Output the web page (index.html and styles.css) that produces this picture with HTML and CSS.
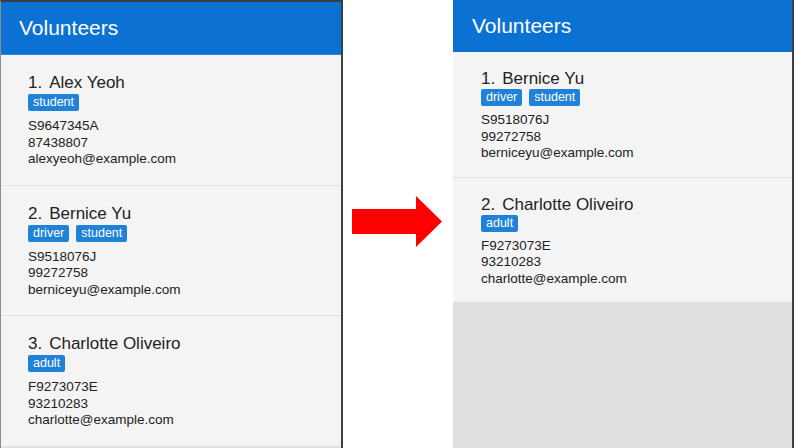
FILE: index.html
```html
<!DOCTYPE html>
<html lang="en">
<head>
<meta charset="utf-8">
<title>Volunteers</title>
<link rel="stylesheet" href="styles.css">
</head>
<body>
<div class="stage">
  <section class="panel panel--before">
    <header class="panel__header">Volunteers</header>
    <ul class="list">
      <li class="card">
        <div class="card__name"><span class="card__index">1.</span>Alex Yeoh</div>
        <div class="tags"><span class="tag">student</span></div>
        <div class="card__details">
          <div>S9647345A</div>
          <div>87438807</div>
          <div>alexyeoh@example.com</div>
        </div>
      </li>
      <li class="card">
        <div class="card__name"><span class="card__index">2.</span>Bernice Yu</div>
        <div class="tags"><span class="tag">driver</span><span class="tag">student</span></div>
        <div class="card__details">
          <div>S9518076J</div>
          <div>99272758</div>
          <div>berniceyu@example.com</div>
        </div>
      </li>
      <li class="card">
        <div class="card__name"><span class="card__index">3.</span>Charlotte Oliveiro</div>
        <div class="tags"><span class="tag">adult</span></div>
        <div class="card__details">
          <div>F9273073E</div>
          <div>93210283</div>
          <div>charlotte@example.com</div>
        </div>
      </li>
    </ul>
  </section>

  <div class="gutter">
    <svg class="arrow" width="90" height="51" viewBox="0 0 90 51" aria-hidden="true">
      <polygon points="0,13 64,13 64,0 90,25.5 64,51 64,38 0,38" fill="#ff0000"/>
    </svg>
  </div>

  <section class="panel panel--after">
    <header class="panel__header">Volunteers</header>
    <ul class="list">
      <li class="card">
        <div class="card__name"><span class="card__index">1.</span>Bernice Yu</div>
        <div class="tags"><span class="tag">driver</span><span class="tag">student</span></div>
        <div class="card__details">
          <div>S9518076J</div>
          <div>99272758</div>
          <div>berniceyu@example.com</div>
        </div>
      </li>
      <li class="card">
        <div class="card__name"><span class="card__index">2.</span>Charlotte Oliveiro</div>
        <div class="tags"><span class="tag">adult</span></div>
        <div class="card__details">
          <div>F9273073E</div>
          <div>93210283</div>
          <div>charlotte@example.com</div>
        </div>
      </li>
    </ul>
  </section>
</div>
</body>
</html>
```

FILE: styles.css
```css
* {
  box-sizing: border-box;
}

html, body {
  margin: 0;
  padding: 0;
  background: #ffffff;
}

body {
  font-family: "Liberation Sans", Arial, sans-serif;
  color: #222222;
}

.stage {
  display: flex;
  width: 794px;
  height: 448px;
  overflow: hidden;
}

.panel {
  display: flex;
  flex-direction: column;
  height: 448px;
  overflow: hidden;
  background: #e0e0e0;
}

.panel--before {
  width: 343px;
  border-left: 1px solid #8c8c8c;
  border-top: 2px solid #3a3c40;
  border-right: 2px solid #3c3f44;
}

.panel--after {
  flex: 1;
  border-right: 2px solid #3c3f44;
}

.panel__header {
  flex: none;
  display: flex;
  align-items: center;
  height: 52px;
  padding-left: 19px;
  background: #0b72d4;
  color: #ffffff;
  font-size: 21px;
}

.panel--before .panel__header {
  height: 53px;
  padding-left: 18px;
  border-bottom: 1px solid #2a86dc;
}

.list {
  list-style: none;
  margin: 0;
  padding: 0;
}

.card {
  padding: 17px 0 15px 28px;
  background: #f4f4f4;
  border-bottom: 1px solid #e1e1e1;
}

.panel--before .card {
  padding: 18px 0 17px 27px;
}

.card__name {
  font-size: 17px;
  line-height: 20px;
  height: 20px;
  white-space: nowrap;
}

.card__index {
  margin-right: 7px;
}

.tags {
  display: flex;
  gap: 7px;
  height: 17px;
}

.panel--before .tags {
  margin-top: 1px;
}

.tag {
  display: inline-block;
  height: 17px;
  padding: 0 5px;
  border-radius: 2px;
  background: #2081d9;
  color: #ffffff;
  font-size: 12.5px;
  line-height: 17px;
}

.card__details {
  margin-top: 6px;
  font-size: 13.5px;
  line-height: 16.5px;
}

.panel--before .card__details {
  margin-top: 7px;
}

.gutter {
  width: 110px;
  flex: none;
  padding: 196px 0 0 9px;
}

.arrow {
  display: block;
}
```
